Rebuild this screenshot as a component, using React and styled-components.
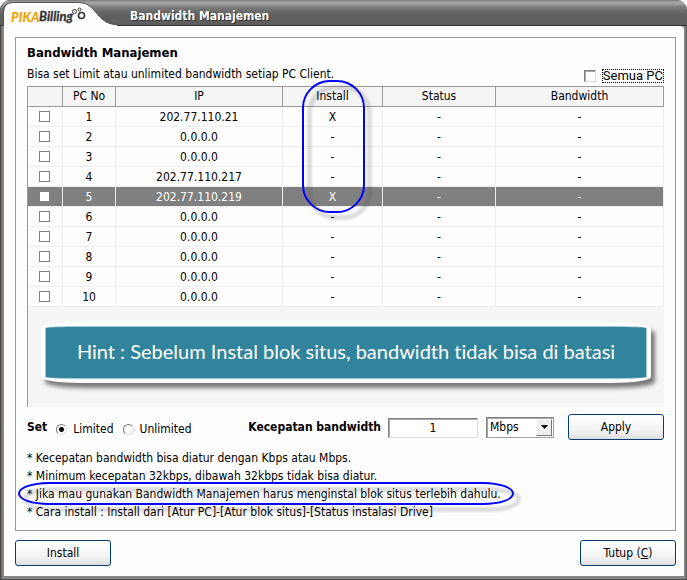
import React, { useState } from "react";
import styled, { createGlobalStyle, css } from "styled-components";

const Global = createGlobalStyle`
  *, *::before, *::after { box-sizing: border-box; }
  body { margin: 0; background: #ffffff; }
  body, button, input, select {
    font-family: "DejaVu Sans Condensed", "DejaVu Sans", sans-serif;
    font-size: 12px;
    color: #000000;
  }
`;

const Window = styled.div`
  display: flex;
  flex-direction: column;
  min-height: 100vh;
  padding: 0 3px 4px 4px;
  border-radius: 10px 10px 0 0;
  background: linear-gradient(90deg, #4e4c4b 0, #4e4c4b 1px, #8a8785 2px, #8a8785 calc(100% - 2px), #555555 100%);
  box-shadow: inset 0 -1px #4b4b4b;
`;

const TitleBar = styled.header`
  display: flex;
  align-items: stretch;
  height: 26px;
  margin: 0 -3px 0 -4px;
  border-radius: 10px 10px 0 0;
  border-bottom: 1px solid #333333;
  background: linear-gradient(#767676 0, #a4a4a4 2px, #a0a0a0 4px, #7c7c7c 7px, #6c6c6c 11px, #606060 15px, #5e5e5e 100%);
`;

const Logo = styled.svg`
  display: block;
  flex: none;
  margin-bottom: -1px;
`;

const WindowTitle = styled.h1`
  margin: 0;
  padding-left: 10px;
  font-size: 12px;
  font-weight: bold;
  line-height: 33px;
  color: #ffffff;
  text-shadow: 1px 1px 0 #333333;
`;

const Body = styled.main`
  display: flex;
  flex: 1;
  flex-direction: column;
  gap: 9px;
  padding: 11px 8px 10px 11px;
  background: #fdfdfd;
  border-radius: 0 4px 0 0;
`;

const Panel = styled.section`
  flex: 1;
  padding: 6px 11px 8px;
  border: 1px solid #999999;
`;

const PanelTitle = styled.h2`
  margin: 0;
  font-size: 13px;
  line-height: 18px;
`;

const Intro = styled.div`
  display: flex;
  justify-content: space-between;
  height: 24px;
  line-height: 24px;
`;

const CheckLabel = styled.label`
  display: flex;
  align-items: center;
  gap: 6px;
  padding-top: 4px;
  font-family: Roboto, sans-serif;
  font-size: 13px;
`;

const LabelText = styled.span`
  padding: 0 1px;
  line-height: 14px;
  outline: 1px dotted #000000;
  outline-offset: -1px;
`;

const sunken = css`
  border: 1px solid;
  border-color: #808080 #dcdcdc #dcdcdc #808080;
  box-shadow: inset 1px 1px #a8a8a8;
`;

const SunkenCheck = styled.input`
  appearance: none;
  width: 12px;
  height: 12px;
  margin: 0;
  background: #ffffff;
  ${sunken}
  &:checked { background: #31849b; }
`;

const Grid = styled.div`
  min-height: 321px;
  padding-bottom: 24px;
  background: #f5f5f5;
  border-left: 1px solid #999999;
`;

const Table = styled.table`
  width: 100%;
  table-layout: fixed;
  border-collapse: separate;
  border-spacing: 0;
  text-align: center;
`;

const HeadCell = styled.th`
  position: relative;
  height: 21px;
  padding: 0;
  font-weight: normal;
  line-height: 19px;
  background: #f5f5f5;
  border: solid #999999;
  border-width: 1px 1px 1px 0;
`;

const Row = styled.tr`
  background: ${(p) => (p.$selected ? "#808080" : "#fefefe")};
  color: ${(p) => (p.$selected ? "#ffffff" : "#000000")};
`;

const Cell = styled.td`
  height: 20px;
  padding: 2px 0 0;
  line-height: 17px;
  border: solid #eeeeee;
  border-width: 0 1px 1px 0;
`;

const CheckCell = styled(Cell)`
  padding: 0 2px 0 0;
`;

const RowCheck = styled.input`
  appearance: none;
  display: block;
  width: 11px;
  height: 11px;
  margin: 0 auto;
  background: #ffffff;
  border: 1px solid #808080;
  &:checked { background: #31849b; }
`;

const Ring = styled.span`
  position: absolute;
  z-index: 2;
  pointer-events: none;
  border: 2px solid #0000ff;
  &::after {
    content: "";
    position: absolute;
    inset: 3px -9px -9px 3px;
    border: 5px solid rgba(60, 60, 60, 0.17);
    border-radius: inherit;
    filter: blur(1px);
  }
`;

const ColumnRing = styled(Ring)`
  top: -7px;
  left: calc(50% - 31px);
  width: 63px;
  height: 133px;
  border-radius: 28px;
`;

const NoteRing = styled(Ring)`
  inset: -3px -13px -2px -9px;
  border-radius: 32px / 12px;
`;

const Hint = styled.p`
  margin: 15px 13px 0;
  padding: 10px 8px 12px;
  font-family: Lato, sans-serif;
  font-size: 20px;
  font-variant-ligatures: none;
  line-height: 31px;
  text-align: center;
  color: #ffffff;
  background: #31849b;
  background-clip: padding-box;
  border: 4px solid #ffffff;
  border-radius: 40px / 6px;
  box-shadow: inset 0 0 0 1px #a0c8d2, 4px 5px 4px rgba(0, 0, 0, 0.5);
`;

const Controls = styled.div`
  display: flex;
  align-items: center;
  margin: 7px 0 9px;
`;

const Choices = styled.fieldset`
  display: flex;
  align-items: center;
  gap: 9px;
  margin: 0;
  padding: 0;
  border: 0;
`;

const Strong = styled.span`
  font-size: 12px;
  font-weight: bold;
`;

const RadioLabel = styled.label`
  display: flex;
  align-items: center;
  gap: 6px;
  padding-top: 4px;
`;

const Radio = styled.input`
  appearance: none;
  width: 11px;
  height: 11px;
  margin: 0;
  border-radius: 50%;
  border: 1px solid;
  border-color: #777777 #dddddd #dddddd #777777;
  background: #ffffff;
  &:checked { background: radial-gradient(circle, #000000 2px, #ffffff 3px); }
`;

const SpeedField = styled.label`
  display: flex;
  align-items: center;
  gap: 7px;
  margin-left: auto;
`;

const SpeedInput = styled.input`
  width: 90px;
  height: 20px;
  padding: 0;
  margin-top: 2px;
  text-align: center;
  background: #ffffff;
  ${sunken}
`;

const SelectBox = styled.div`
  display: grid;
  align-items: center;
  width: 68px;
  height: 21px;
  margin: 0 14px 0 8px;
  background: #ffffff;
  border: 1px solid;
  border-color: #808080 #a0a0a0 #a0a0a0 #808080;
  box-shadow: inset 1px 1px #a8a8a8;
  & > * { grid-area: 1 / 1; }
`;

const Select = styled.select`
  appearance: none;
  width: 100%;
  height: 19px;
  padding: 0 20px 0 3px;
  border: 0;
  background: transparent;
`;

const Arrow = styled.span`
  display: grid;
  place-items: center;
  justify-self: end;
  width: 16px;
  height: 17px;
  margin-right: 1px;
  background: #eeeeee;
  border: 1px solid;
  border-color: #ffffff #777777 #777777 #ffffff;
  pointer-events: none;
`;

const Button = styled.button`
  width: 96px;
  height: 26px;
  padding: 0;
  border: 1px solid #003c74;
  border-radius: 3px;
  background: linear-gradient(#ffffff 0, #fafafa 30%, #f3f3f3 60%, #ebebeb 80%, #dddddd 100%);
`;

const Notes = styled.ul`
  margin: 0;
  padding: 0;
  list-style: none;
  line-height: 18px;
`;

const NoteText = styled.span`
  position: relative;
  display: inline-block;
  vertical-align: top;
`;

const Footer = styled.footer`
  display: flex;
  justify-content: space-between;
`;

const ROWS = [
  ["202.77.110.21", "X"],
  ["0.0.0.0", "-"],
  ["0.0.0.0", "-"],
  ["202.77.110.217", "-"],
  ["202.77.110.219", "X"],
  ["0.0.0.0", "-"],
  ["0.0.0.0", "-"],
  ["0.0.0.0", "-"],
  ["0.0.0.0", "-"],
  ["0.0.0.0", "-"],
];

const NOTES = [
  { text: "* Kecepatan bandwidth bisa diatur dengan Kbps atau Mbps." },
  { text: "* Minimum kecepatan 32kbps, dibawah 32kbps tidak bisa diatur." },
  { text: "* Jika mau gunakan Bandwidth Manajemen harus menginstal blok situs terlebih dahulu.", ringed: true },
  { text: "* Cara install : Install dari [Atur PC]-[Atur blok situs]-[Status instalasi Drive]" },
];

function PikaLogo() {
  return (
    <Logo width="120" height="26" viewBox="0 0 120 26" role="img" aria-label="PIKABilling">
      <path d="M4 26V12Q4 3 13 3H80C96 3 97 25 117 25V26Z" fill="#fdfdfd" />
      <path d="M3.500 26V12Q3.500 2.500 13 2.500H80C96 2.500 97 24.500 117 24.500" fill="none" stroke="#555555" />
      <text x="11" y="22" fontFamily="Lato, sans-serif" fontSize="13" fontWeight="900" fontStyle="italic" fill="#f2a100">PIKA</text>
      <text x="39" y="21" fontFamily="Lato, sans-serif" fontSize="13" fontWeight="bold" fontStyle="italic" fill="#333333" stroke="#333333" strokeWidth="0.300">Billing</text>
      <g fill="#ffffff" stroke="#333333">
        <circle cx="74.500" cy="11.500" r="2" />
        <circle cx="79.500" cy="9.500" r="1.500" />
        <circle cx="81.500" cy="15.500" r="3" strokeWidth="1.600" />
      </g>
    </Logo>
  );
}

export default function App() {
  const [mode, setMode] = useState("limited");
  return (
    <>
      <Global />
      <Window>
        <TitleBar>
          <PikaLogo />
          <WindowTitle>Bandwidth Manajemen</WindowTitle>
        </TitleBar>
        <Body>
          <Panel>
            <PanelTitle>Bandwidth Manajemen</PanelTitle>
            <Intro>
              <span>Bisa set Limit atau unlimited bandwidth setiap PC Client.</span>
              <CheckLabel>
                <SunkenCheck type="checkbox" />
                <LabelText>Semua PC</LabelText>
              </CheckLabel>
            </Intro>
            <Grid>
              <Table>
                <colgroup>
                  <col width="35" />
                  <col width="53" />
                  <col width="167" />
                  <col width="100" />
                  <col width="113" />
                  <col />
                </colgroup>
                <thead>
                  <tr>
                    <HeadCell aria-label="Pilih" />
                    <HeadCell>PC No</HeadCell>
                    <HeadCell>IP</HeadCell>
                    <HeadCell>Install<ColumnRing /></HeadCell>
                    <HeadCell>Status</HeadCell>
                    <HeadCell>Bandwidth</HeadCell>
                  </tr>
                </thead>
                <tbody>
                  {ROWS.map(([ip, install], i) => (
                    <Row key={i} $selected={i === 4}>
                      <CheckCell><RowCheck type="checkbox" aria-label={`PC ${i + 1}`} /></CheckCell>
                      <Cell>{i + 1}</Cell>
                      <Cell>{ip}</Cell>
                      <Cell>{install}</Cell>
                      <Cell>-</Cell>
                      <Cell>-</Cell>
                    </Row>
                  ))}
                </tbody>
              </Table>
              <Hint>Hint : Sebelum Instal blok situs, bandwidth tidak bisa di batasi</Hint>
            </Grid>
            <Controls>
              <Choices aria-label="Set">
                <Strong>Set</Strong>
                <RadioLabel>
                  <Radio type="radio" name="mode" checked={mode === "limited"} onChange={() => setMode("limited")} />
                  Limited
                </RadioLabel>
                <RadioLabel>
                  <Radio type="radio" name="mode" checked={mode === "unlimited"} onChange={() => setMode("unlimited")} />
                  Unlimited
                </RadioLabel>
              </Choices>
              <SpeedField>
                <Strong>Kecepatan bandwidth</Strong>
                <SpeedInput type="text" defaultValue="1" />
              </SpeedField>
              <SelectBox>
                <Select aria-label="Satuan" defaultValue="Mbps">
                  <option>Kbps</option>
                  <option>Mbps</option>
                </Select>
                <Arrow>
                  <svg width="7" height="4" viewBox="0 0 7 4"><path d="M0 0H7L3.500 4Z" /></svg>
                </Arrow>
              </SelectBox>
              <Button type="button">Apply</Button>
            </Controls>
            <Notes>
              {NOTES.map((note) => (
                <li key={note.text}>
                  <NoteText>
                    {note.text}
                    {note.ringed && <NoteRing />}
                  </NoteText>
                </li>
              ))}
            </Notes>
          </Panel>
          <Footer>
            <Button type="button">Install</Button>
            <Button type="button">Tutup (<u>C</u>)</Button>
          </Footer>
        </Body>
      </Window>
    </>
  );
}
